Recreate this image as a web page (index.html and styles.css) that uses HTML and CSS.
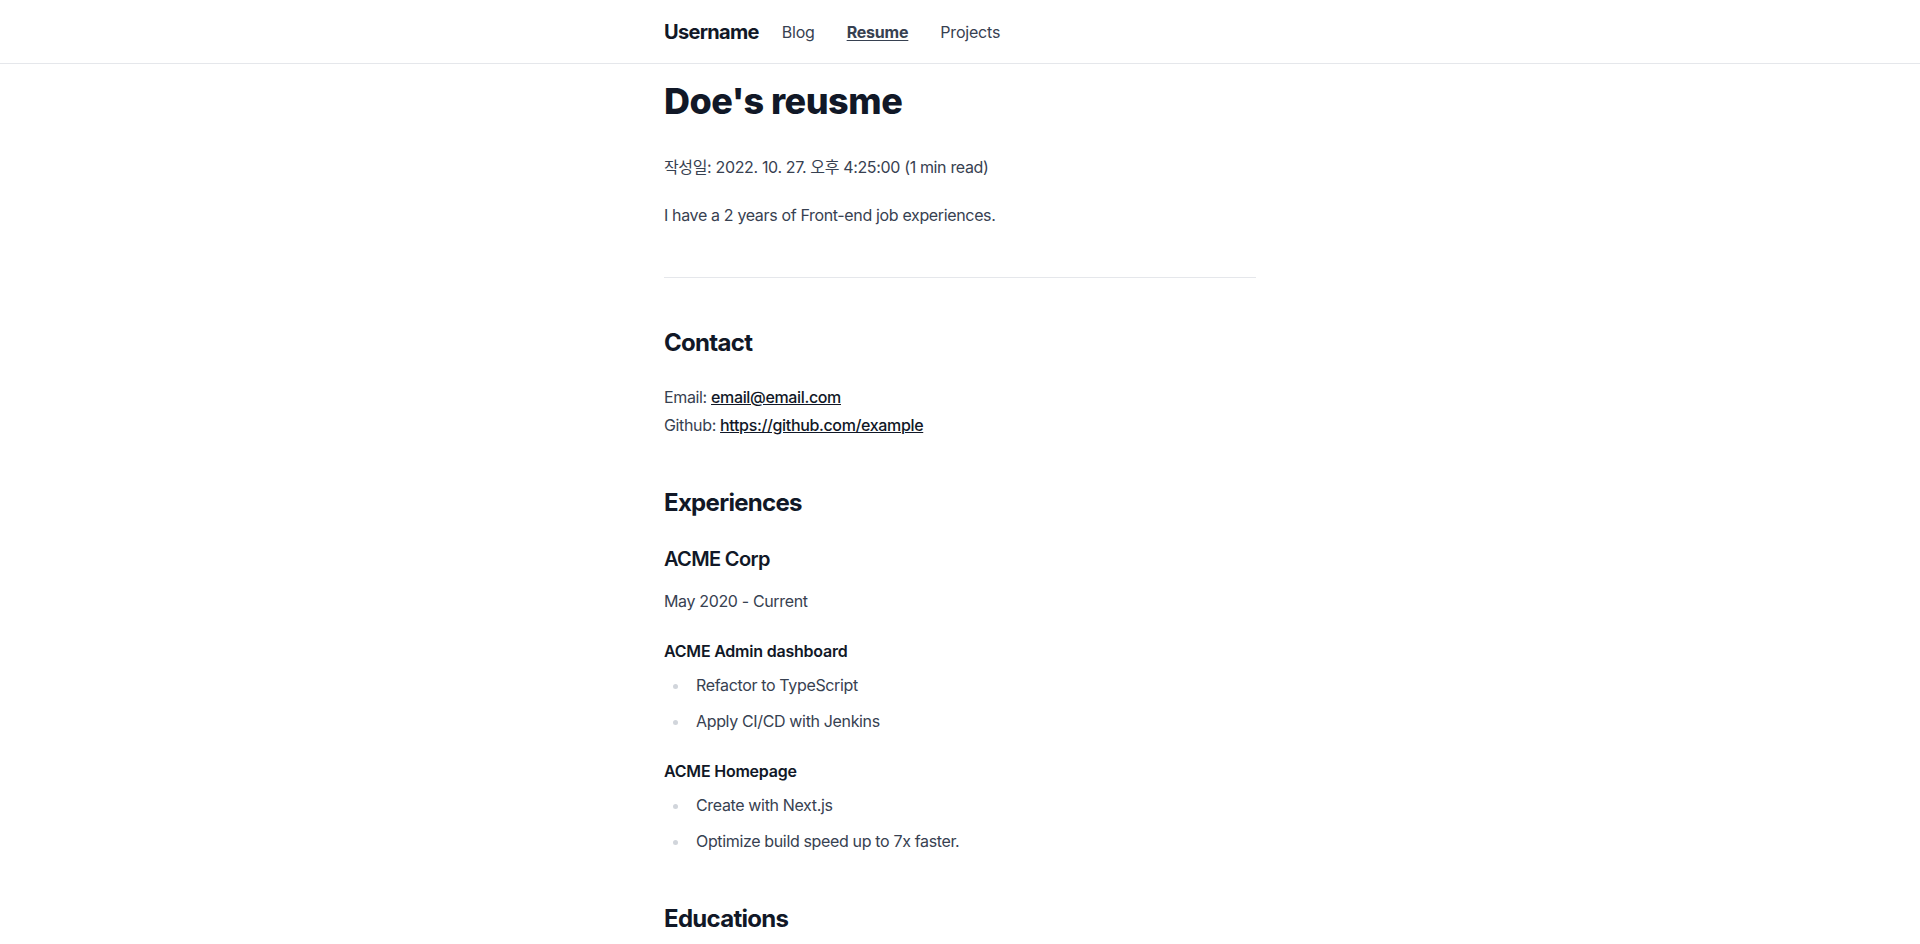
FILE: index.html
```html
<!DOCTYPE html>
<html lang="ko">
<head>
<meta charset="utf-8">
<title>Doe's reusme</title>
<link rel="stylesheet" href="styles.css">
</head>
<body>
<header class="site-header">
  <nav class="nav">
    <a class="brand" href="#">Username</a>
    <div class="nav-links">
      <a class="nav-link" href="#">Blog</a>
      <a class="nav-link active" href="#">Resume</a>
      <a class="nav-link" href="#">Projects</a>
    </div>
  </nav>
</header>
<main class="main">
  <article class="prose">
    <h1>Doe's reusme</h1>
    <p>작성일: 2022. 10. 27. 오후 4:25:00 (1 min read)</p>
    <p>I have a 2 years of Front-end job experiences.</p>
    <hr>
    <h2>Contact</h2>
    <p>Email: <a href="#">email@email.com</a><br>Github: <a href="#">https://github.com/example</a></p>
    <h2>Experiences</h2>
    <h3>ACME Corp</h3>
    <p>May 2020 - Current</p>
    <h4>ACME Admin dashboard</h4>
    <ul>
      <li>Refactor to TypeScript</li>
      <li>Apply CI/CD with Jenkins</li>
    </ul>
    <h4>ACME Homepage</h4>
    <ul>
      <li>Create with Next.js</li>
      <li>Optimize build speed up to 7x faster.</li>
    </ul>
    <h2>Educations</h2>
    <h3>ACME University</h3>
    <p>Mar 2014 - Feb 2020</p>
  </article>
</main>
</body>
</html>
```
FILE: styles.css
```css
* { box-sizing: border-box; }
html, body { margin: 0; padding: 0; background: #ffffff; }
body {
  font-family: Inter, "Noto Sans CJK KR", sans-serif;
  font-size: 16px;
  line-height: 1.5;
  color: #374151;
}
.site-header {
  height: 64px;
  border-bottom: 1px solid #e5e7eb;
}
.nav {
  max-width: 592px;
  height: 100%;
  margin: 0 auto;
  display: flex;
  align-items: center;
}
.brand {
  font-size: 20px;
  font-weight: 700;
  color: #111827;
  text-decoration: none;
  letter-spacing: -0.7px;
}
.nav-links {
  display: flex;
  gap: 32px;
  margin-left: 23px;
}
.nav-link {
  color: #374151;
  text-decoration: none;
  font-size: 16px;
  letter-spacing: -0.2px;
}
.nav-link.active {
  font-weight: 700;
  text-decoration: underline;
  text-underline-offset: 2px;
}
.main {
  padding-top: 17px;
}
.prose {
  max-width: 592px;
  margin: 0 auto;
  font-size: 16px;
  line-height: 1.75;
  color: #374151;
  letter-spacing: -0.35px;
}
.prose h1 {
  font-size: 36px;
  font-weight: 800;
  line-height: 1.1111;
  color: #111827;
  margin: 0 0 32px;
  letter-spacing: -0.5px;
}
.prose h2 {
  font-size: 24px;
  font-weight: 700;
  line-height: 1.3333;
  color: #111827;
  margin: 48px 0 24px;
  letter-spacing: -0.7px;
}
.prose h3 {
  font-size: 20px;
  font-weight: 600;
  line-height: 1.6;
  color: #111827;
  margin: 32px 0 12px;
  letter-spacing: -0.65px;
}
.prose h4 {
  font-size: 16px;
  font-weight: 600;
  line-height: 1.5;
  color: #111827;
  margin: 24px 0 8px;
  letter-spacing: -0.22px;
}
.prose p { margin: 20px 0; }
.prose hr {
  border: 0;
  border-top: 1px solid #e5e7eb;
  margin: 48px 0 49px;
}
.prose a {
  color: #111827;
  font-weight: 500;
  text-decoration: underline;
}
.prose ul {
  margin: 20px 0;
  padding-left: 26px;
  list-style: disc;
}
.prose li {
  margin: 8px 0;
  padding-left: 6px;
}
.prose li::marker { color: #d1d5db; }
.prose h2 + *, .prose h3 + *, .prose h4 + *, .prose hr + * { margin-top: 0; }
```
